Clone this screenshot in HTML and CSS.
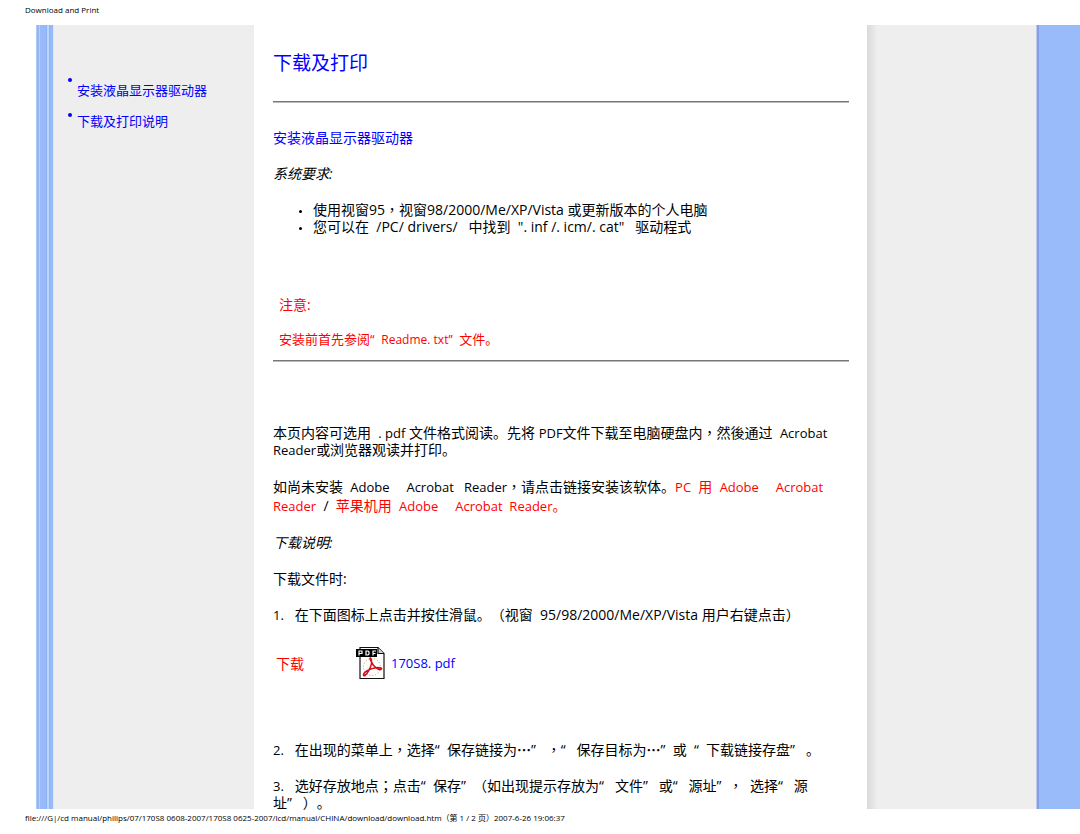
FILE: index.html
```
<!DOCTYPE html>
<html lang="zh-CN">
<head>
<meta charset="utf-8">
<title>Download and Print</title>
<link rel="stylesheet" href="styles.css">
</head>
<body>
<header class="page-title">Download and Print</header>
<div class="columns">
  <div class="rail-left"></div>
  <nav class="sidebar">
    <ul class="nav-list">
      <li><a href="#install">安装液晶显示器驱动器</a></li>
      <li><a href="#howto">下载及打印说明</a></li>
    </ul>
  </nav>
  <main class="content">
    <h1>下载及打印</h1>
    <hr>
    <h2 id="install">安装液晶显示器驱动器</h2>
    <p><em>系统要求:</em></p>
    <ul class="requirements">
      <li>使用视窗95<span class="mid" lang="zh-TW">，</span>视窗98/2000/Me/XP/Vista 或更新版本的个人电脑</li>
      <li>您可以在&nbsp; /PC/ drivers/&nbsp; &nbsp;中找到&nbsp; ". inf /. icm/. cat"&nbsp; &nbsp;驱动程式</li>
    </ul>
    <section class="note">
      <p class="note-title">注意:</p>
      <p>安装前首先参阅“&nbsp; <span class="latin-note">Readme. txt”</span> &nbsp;文件。</p>
    </section>
    <hr>
    <section class="intro">
      <p>本页内容可选用&nbsp; <span class="latin">. pdf</span> 文件格式阅读。先将 <span class="latin">PDF</span>文件下载至电脑硬盘内<span class="mid" lang="zh-TW">，</span>然後通过&nbsp; <span class="latin">Acrobat<br>Reader</span>或浏览器观读并打印。</p>
      <p class="loose">如尚未安装&nbsp; <span class="latin">Adobe&nbsp; &nbsp; &nbsp;Acrobat&nbsp; &nbsp;Reader</span><span class="mid" lang="zh-TW">，</span>请点击链接安装该软体。<a class="red" href="#pc"><span class="latin">PC</span>&nbsp; 用&nbsp; <span class="latin">Adobe&nbsp; &nbsp; &nbsp;Acrobat<br>Reader</span></a>&nbsp; /&nbsp; <a class="red" href="#mac">苹果机用&nbsp; <span class="latin">Adobe&nbsp; &nbsp; &nbsp;Acrobat&nbsp; Reader</span>。</a></p>
      <p id="howto"><em>下载说明:</em></p>
      <p>下载文件时:</p>
      <p><span class="latin">1.</span> &nbsp; 在下面图标上点击并按住滑鼠。（视窗&nbsp; 95/98/2000/Me/XP/Vista 用户右键点击）</p>
    </section>
    <div class="download">
      <span class="download-label">下载</span>
      <a class="file" href="#pdf">
        <svg class="pdf-icon" viewBox="0 0 30 34" aria-hidden="true">
          <path d="M5 1.5h18l6 6v25H5z" fill="#fff" stroke="#111" stroke-width="1.2"/>
          <path d="M23 1.5v6h6" fill="#ccc" stroke="#111" stroke-width="1.2"/>
          <circle cx="17" cy="21" r="8.5" fill="none" stroke="#b99a60" stroke-dasharray="1 2"/>
          <path d="M15.500 12c2 3 1 8-2 13-2 4-5 6-5 4 0-3 6-6 11-7 4-1 8 0 7 1-2 2-8-2-10-7-1-2-2-4-1-4z" fill="none" stroke="#d01018" stroke-width="1.6"/>
          <path d="M1 3h21v8H1z" fill="#000"/>
          <path d="M4 9.500V5h3v2.500H4M11 5v4h2l1-1V6l-1-1zM18 9.500V5h3m-3 2.500h2.500" fill="none" stroke="#fff" stroke-width="1.200"/>
        </svg>
        <span class="latin">170S8. pdf</span>
      </a>
    </div>
    <p><span class="latin">2.</span> &nbsp; 在出现的菜单上<span class="mid" lang="zh-TW">，</span>选择“&nbsp; 保存链接为<b class="mid" lang="zh-TW">…</b>”&nbsp; &nbsp;<span class="mid" lang="zh-TW">，</span>“&nbsp; &nbsp;保存目标为<b class="mid" lang="zh-TW">…</b>”&nbsp; 或&nbsp; “&nbsp; 下载链接存盘”&nbsp; &nbsp;。</p>
    <p class="last"><span class="latin">3.</span> &nbsp; 选好存放地点<span class="mid" lang="zh-TW">；</span>点击“&nbsp; 保存”&nbsp; （如出现提示存放为“&nbsp; &nbsp;文件”&nbsp; &nbsp;或“&nbsp; &nbsp;源址”&nbsp; <span class="mid" lang="zh-TW">，</span>&nbsp; 选择“&nbsp; &nbsp;源<br>址”&nbsp; &nbsp;）。</p>
  </main>
  <div class="gutter"></div>
  <div class="rail-right"></div>
</div>
<footer class="page-footer">file:///G|/cd manual/philips/07/170S8 0608-2007/170S8 0625-2007/lcd/manual/CHINA/download/download.htm（第 1 / 2 页）2007-6-26 19:06:37</footer>
</body>
</html>
```
FILE: styles.css
```
body {
  margin: 0;
  background: #fff;
  color: #000;
  font: 14px/17px "Open Sans", "Noto Sans CJK SC", sans-serif;
}
a { color: #00f; text-decoration: none; }
.page-title {
  padding: 3px 25px 8px;
  font-size: 8px;
  line-height: 14px;
}
.columns {
  display: flex;
  padding-left: 36px;
}
.rail-left {
  flex: 0 0 18px;
  background: linear-gradient(90deg, #a9c9fb 0 1px, #96b6f7 1px 3px, #b3d1fc 3px 4px, #99baf8 4px 10px, #8fb0f4 10px 11px, #b9d6fd 11px 13px, #93b3f5 13px 14px, #99baf8 14px 17px, #dfe7f5 17px 18px);
}
.sidebar {
  flex: 0 0 200px;
  background: #eee;
}
.nav-list {
  margin: 0;
  padding: 57px 12px 0 14px;
  list-style: none;
  font-size: 13px;
}
.nav-list li {
  display: flex;
  gap: 5px;
  margin-bottom: 14px;
}
.nav-list li::before {
  content: "";
  width: 4px;
  height: 4px;
  flex: none;
  border-radius: 50%;
  background: #00f;
}
.nav-list li:first-child::before { margin-top: -4px; }
.content {
  flex: 1;
  min-width: 0;
  padding: 26px 18px 0 19px;
  text-spacing-trim: space-all;
}
h1 {
  margin: 0 0 26px;
  color: #00f;
  font-size: 19px;
  font-weight: 400;
  line-height: 24px;
}
hr {
  margin: 0;
  border: 0;
  border-top: 1px solid #777;
  border-bottom: 1px solid #bbb;
}
h2 {
  margin: 26px 0 19px;
  color: #00f;
  font-size: 14px;
  font-weight: 400;
}
p { margin: 0 0 19px; }
.mid { font-family: "Noto Sans CJK TC", sans-serif; line-height: 1; }
.latin { font-size: 13px; line-height: 1; }
.latin-note { font-size: 12px; line-height: 1; }
.requirements {
  margin: 0 0 61px;
  padding-left: 40px;
  list-style: none;
}
.requirements li { position: relative; }
.requirements li::before {
  content: "";
  position: absolute;
  top: 9px;
  left: -14px;
  width: 3px;
  height: 3px;
  border-radius: 50%;
  background: #000;
}
.note {
  padding: 0 6px 12px;
  color: #f00;
  font-size: 13px;
}
.note p { margin: 0; }
.note .note-title {
  margin-bottom: 18px;
  font-size: 14px;
}
.intro { padding-top: 62px; }
.loose { line-height: 19px; }
.red { color: #f00; }
.download {
  display: flex;
  align-items: center;
  padding: 4px 3px 61px;
}
.download-label {
  width: 79px;
  color: #f00;
}
.file {
  display: flex;
  align-items: center;
  gap: 6px;
}
.pdf-icon {
  width: 30px;
  height: 34px;
}
.content .last { margin-bottom: -2px; }
.gutter {
  flex: 0 0 169px;
  background: linear-gradient(90deg, #d9d9d9, #e3e3e3 5px, #eee 10px);
}
.rail-right {
  flex: 0 0 44px;
  background: linear-gradient(90deg, #c5c8e8 0 1px, #7f9fe6 1px 3px, #99bbf9 3px);
}
.page-footer {
  padding: 2px 25px;
  font-size: 8px;
  line-height: 14px;
}
```
